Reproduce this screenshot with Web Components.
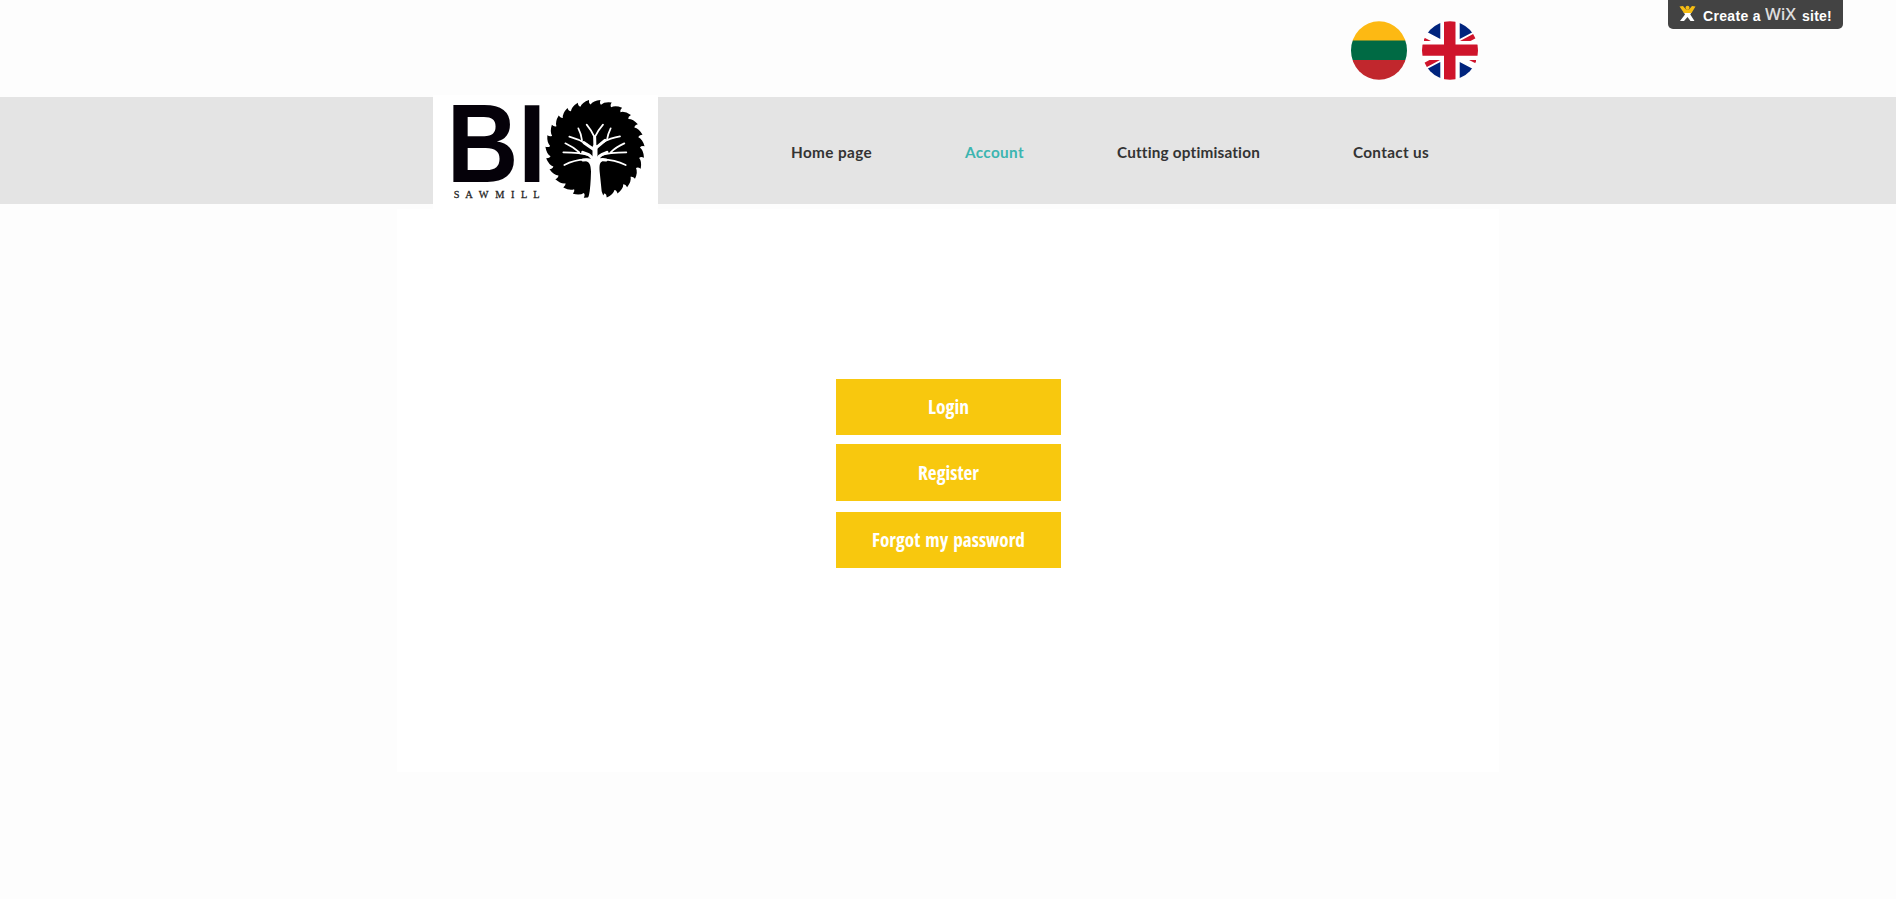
<!DOCTYPE html>
<html lang="en">
<head>
<meta charset="utf-8">
<title>Bio Sawmill</title>
<style>
html,body{margin:0;height:100%;background:#fdfdfd;overflow:hidden;font-family:"Liberation Sans",Arial,sans-serif}
</style>
</head>
<body>
<bio-page></bio-page>
<script>
function define(name, html, setup) {
  customElements.define(name, class extends HTMLElement {
    connectedCallback() {
      if (this.shadowRoot) return;
      this.attachShadow({mode: 'open'}).innerHTML = html;
      if (setup) setup(this, this.shadowRoot);
    }
  });
}

// Saw blade outline: each tooth ramps up clockwise, then hooks back to the root.
function bladePath(cx, cy, outer, root, teeth, start) {
  const pt = (r, a) => (cx + r * Math.cos(a)).toFixed(1) + ' ' + (cy + r * Math.sin(a)).toFixed(1);
  const step = Math.PI * 2 / teeth;
  let d = '';
  for (let i = 0; i < teeth; i++) {
    const a = start + i * step;
    d += (i ? 'L' : 'M') + pt(outer, a);
    d += 'Q' + pt(root + 5, a - step * .08) + ' ' + pt(root + 1, a + step * .1);
    d += 'Q' + pt(outer - 3, a + step * .36) + ' ' + pt(outer, a + step);
  }
  return d + 'Z';
}

// Line of text set to an exact width, by tracking or by horizontal scale.
define('fit-text', `<style>
:host{display:block;white-space:nowrap}
span{display:inline-block;transform-origin:0 50%}
</style><span><slot></slot></span>`, (host, root) => {
  const span = root.querySelector('span');
  const target = +host.getAttribute('width');
  host.style.width = target + 'px';
  const natural = span.getBoundingClientRect().width;
  if (host.getAttribute('mode') === 'scale') span.style.transform = 'scaleX(' + target / natural + ')';
  else span.style.letterSpacing = (target - natural) / host.textContent.length + 'px';
});

define('flag-lt', `<style>:host{display:block;width:56px;height:59px}svg{display:block}</style>
<svg width="56" height="59" viewBox="0 0 56 59"><clipPath id="c"><ellipse cx="28" cy="29.5" rx="28" ry="29.3"/></clipPath>
<g clip-path="url(#c)"><path fill="#fdb913" d="M0 0h56v20H0z"/><path fill="#006a44" d="M0 19.5h56v19.600H0z"/><path fill="#c1272d" d="M0 39.100h56V59H0z"/></g></svg>`);

define('flag-uk', `<style>:host{display:block;width:56px;height:59px}svg{display:block}</style>
<svg width="56" height="59" viewBox="0 0 56 59"><clipPath id="c"><ellipse cx="28" cy="29.5" rx="28" ry="29.3"/></clipPath>
<g clip-path="url(#c)"><path fill="#fff" d="M0 0h56v59H0z"/>
<path fill="#00247d" d="M18.300 0v18L5 11V0zM37.700 0v18L51 11V0zM18.300 59V41L5 48v11zM37.700 59V41L51 48v11z"/>
<path fill="#cf142b" d="M2 16.500L9 20H2zM38 20l14-7.500 3 4L48.500 20zM18 39L4 46.500 1 42.500 7.500 39zM54 42.500L47 39h7z"/>
<path fill="#cf142b" d="M22 0h11.500v59H22zM0 23.500h56v11.300H0z"/></g></svg>`);

define('bio-logo', `<style>:host{display:block;width:225px;height:114px;background:#fff}svg{display:block;overflow:visible}
.bi{font:bold 320px "Liberation Sans",Arial,sans-serif}.sm{font:31px "Liberation Serif",serif}</style>
<svg width="225" height="114" viewBox="24 15 675 342">
<g fill="#050109"><text class="bi" transform="translate(65 276) scale(.93 1.035)">B</text><text class="bi" transform="translate(279 276) scale(.95 1.035)">I</text>
<text class="sm" y="323" x="86 121 161 211 258 288 325" fill="#222" stroke="#222" stroke-width=".8">SAWMILL</text></g>
<path class="blade"/>
<path fill="#fff" d="M498 245C497 222 493 217 482 212L533 212C523 219 523 226 524 245L530 304L536 320L544 345H482L492 315Q497 290 498 245Z"/>
<g fill="none" stroke="#fff" stroke-linecap="round" stroke-linejoin="round">
<path stroke-width="15" d="M510 222V172"/>
<path stroke-width="9" d="M510 182L509 142M501 212Q490 208 474 210M517 212Q530 207 543 210M504 206L491 194L473 187M516 206L530 194L546 187M504 177L477 158M514 173L540 151"/>
<path stroke-width="5.200" d="M509 142Q500 122 485 104M509 142Q519 121 534 104M485 163Q461 147 433 140M471 151Q469 132 460 115M531 158Q557 143 585 139M546 149Q549 131 557 115M496 197Q465 187 415 187M463 187Q446 172 421 160M522 197Q554 187 604 187M557 187Q573 171 598 160M489 209Q451 207 418 225M531 209Q569 209 602 225"/>
</g></svg>`, (host, root) => {
  root.querySelector('.blade').setAttribute('d', bladePath(510, 178, 149, 134, 27, -1.46));
});

define('site-nav', `<style>
:host{display:flex;color:#333;font:700 15.300px/20px Lato,sans-serif}
.on{color:#3cb5b0}
.a{margin-left:93px}.b{margin-left:93px}.c{margin-left:93px}
</style>
<fit-text width="81">Home page</fit-text><fit-text class="on a" width="59">Account</fit-text><fit-text class="b" width="143">Cutting optimisation</fit-text><fit-text class="c" width="76">Contact us</fit-text>`);

define('action-button', `<style>
:host{display:flex;box-sizing:border-box;width:225px;height:56px;align-items:center;justify-content:center;background:#f8c80e;color:#fff;
font:700 19.700px/28px "Open Sans",sans-serif;font-stretch:75%;word-spacing:1.500px}
</style><slot></slot>`);

define('wix-badge', `<style>
:host{display:flex;box-sizing:border-box;width:175px;height:29px;padding:0 0 0 11px;background:#434343;border-radius:0 0 5px 5px;color:#fff;font:bold 14px/16px "Liberation Sans",Arial,sans-serif}
svg{display:block;margin-top:5px}
.t{margin:8px 0 0 7px}.w{margin:6px 0 0 4px;font:600 16px/16px "Open Sans",sans-serif;color:#ddd}.e{margin:8px 0 0 6px}
</style>
<svg width="17" height="17" viewBox="0 0 17 17"><path fill="#fff" d="M4.500 7h8l-1.200 2.500L15.500 16h-4L8.500 12 5 16H1l5-6.500z"/><path fill="#f6bd13" d="M.5 1.500L4 1l3 3.500h3L13 1l3.500.5L12.500 8H5z"/><circle cx="8.500" cy="2.700" r="2" fill="#f6bd13"/></svg>
<fit-text class="t" width="58">Create a</fit-text><fit-text class="w" mode="scale" width="31">WiX</fit-text><fit-text class="e" width="30">site!</fit-text>`);

define('bio-page', `<style>
:host{display:block;height:899px;background:#fdfdfd}
.top{display:flex;height:97px}
.flags{display:flex;gap:15px;padding:21px 0 0 1351px}
wix-badge{margin-left:190px}
header{display:flex;height:107px;background:#e4e4e4}
bio-logo{margin:-2px 0 0 433px;position:relative}
site-nav{margin:45px 0 0 133px}
main{display:flex;flex-direction:column;align-items:center;box-sizing:border-box;width:1102px;height:563px;margin:5px 0 0 397px;padding-top:170px;background:#fff}
action-button{margin-left:1px}
.two{height:57px;margin-top:9px}.three{margin-top:11px}
</style>
<div class="top"><div class="flags"><flag-lt></flag-lt><flag-uk></flag-uk></div><wix-badge></wix-badge></div>
<header><bio-logo></bio-logo><site-nav></site-nav></header>
<main>
<action-button><fit-text mode="scale" width="41">Login</fit-text></action-button>
<action-button class="two"><fit-text mode="scale" width="61">Register</fit-text></action-button>
<action-button class="three"><fit-text mode="scale" width="153">Forgot my password</fit-text></action-button>
</main>`);
</script>
</body>
</html>
